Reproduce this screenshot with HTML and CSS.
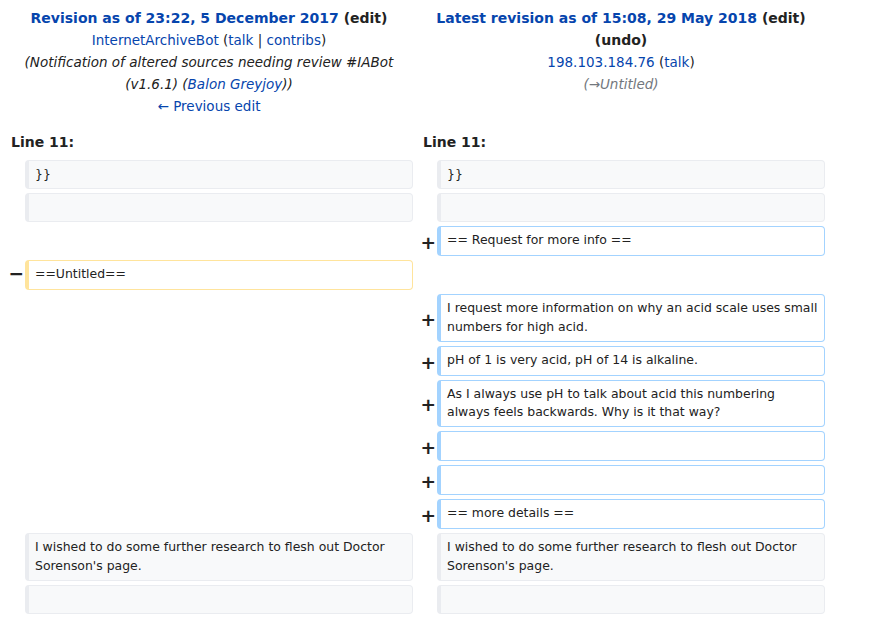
FILE: index.html
```html
<!DOCTYPE html>
<html lang="en">
<head>
<meta charset="utf-8">
<title>Difference between revisions</title>
<link rel="stylesheet" href="styles.css">
</head>
<body>
<table class="diff">
  <colgroup>
    <col class="col-marker"><col class="col-content"><col class="col-marker"><col class="col-content">
  </colgroup>
  <tr class="title-row">
    <td colspan="2" class="title">
      <div class="title-main"><a href="#" class="link">Revision as of 23:22, 5 December 2017</a> <span class="dark">(edit)</span></div>
      <div><a href="#" class="link">InternetArchiveBot</a> (<a href="#" class="link">talk</a> | <a href="#" class="link">contribs</a>)</div>
      <div class="comment">(Notification of altered sources needing review #IABot (v1.6.1) (<a href="#" class="link">Balon Greyjoy</a>))</div>
      <div><a href="#" class="link">← Previous edit</a></div>
    </td>
    <td colspan="2" class="title">
      <div class="title-main"><a href="#" class="link">Latest revision as of 15:08, 29 May 2018</a> <span class="dark">(edit)</span> <span class="dark">(undo)</span></div>
      <div><a href="#" class="link">198.103.184.76</a> (<a href="#" class="link">talk</a>)</div>
      <div class="comment muted">(→Untitled)</div>
    </td>
  </tr>
  <tr>
    <td colspan="2" class="lineno">Line 11:</td>
    <td colspan="2" class="lineno">Line 11:</td>
  </tr>
  <tr>
    <td class="marker"></td><td class="line context">}}</td>
    <td class="marker"></td><td class="line context">}}</td>
  </tr>
  <tr>
    <td class="marker"></td><td class="line context"><br></td>
    <td class="marker"></td><td class="line context"><br></td>
  </tr>
  <tr>
    <td colspan="2" class="blank"></td>
    <td class="marker"><span class="sign">+</span></td><td class="line added">== Request for more info ==</td>
  </tr>
  <tr>
    <td class="marker marker-del"><span class="sign">−</span></td><td class="line deleted">==Untitled==</td>
    <td colspan="2" class="blank"></td>
  </tr>
  <tr>
    <td colspan="2" class="blank"></td>
    <td class="marker"><span class="sign">+</span></td><td class="line added">I request more information on why an acid scale uses small numbers for high acid.</td>
  </tr>
  <tr>
    <td colspan="2" class="blank"></td>
    <td class="marker"><span class="sign">+</span></td><td class="line added">pH of 1 is very acid, pH of 14 is alkaline.</td>
  </tr>
  <tr>
    <td colspan="2" class="blank"></td>
    <td class="marker"><span class="sign">+</span></td><td class="line added">As I always use pH to talk about acid this numbering always feels backwards. Why is it that way?</td>
  </tr>
  <tr>
    <td colspan="2" class="blank"></td>
    <td class="marker"><span class="sign">+</span></td><td class="line added"><br></td>
  </tr>
  <tr>
    <td colspan="2" class="blank"></td>
    <td class="marker"><span class="sign">+</span></td><td class="line added"><br></td>
  </tr>
  <tr>
    <td colspan="2" class="blank"></td>
    <td class="marker"><span class="sign">+</span></td><td class="line added">== more details ==</td>
  </tr>
  <tr>
    <td class="marker"></td><td class="line context">I wished to do some further research to flesh out Doctor Sorenson's page.</td>
    <td class="marker"></td><td class="line context">I wished to do some further research to flesh out Doctor Sorenson's page.</td>
  </tr>
  <tr>
    <td class="marker"></td><td class="line context"><br></td>
    <td class="marker"></td><td class="line context"><br></td>
  </tr>
</table>
</body>
</html>
```

FILE: styles.css
```css
html, body {
  margin: 0;
  padding: 0;
  background: #ffffff;
}

body {
  font-family: "DejaVu Sans", Verdana, sans-serif;
  color: #222222;
  font-size: 14px;
}

.diff {
  border-collapse: separate;
  border-spacing: 4px;
  table-layout: fixed;
  width: 828px;
  margin: 0 0 0 1px;
}

.col-marker {
  width: 16px;
}

.col-content {
  width: 388px;
}

.title {
  text-align: center;
  vertical-align: top;
  line-height: 22px;
  padding: 3px 0 7px;
  font-size: 13.5px;
}

.title-main {
  font-weight: bold;
  font-size: 14px;
}

.link {
  color: #0645ad;
  text-decoration: none;
}

.dark {
  color: #222222;
}

.comment {
  font-style: italic;
}

.muted {
  color: #72777d;
}

.lineno {
  font-weight: bold;
  font-size: 14px;
  line-height: 22px;
  padding: 3px 6px;
  text-align: left;
}

.marker {
  text-align: right;
  vertical-align: middle;
  font-weight: bold;
  font-size: 18.5px;
  line-height: 21px;
  padding: 6px 0 3px;
  color: #222222;
  white-space: nowrap;
}

.marker-del {
  padding: 3px 0 6px;
}

.sign {
  margin-right: -3px;
}

.line {
  font-size: 12.45px;
  line-height: 18.5px;
  padding: 4.25px 6px;
  vertical-align: top;
  border: 1px solid #eaecf0;
  border-left-width: 4px;
  border-radius: 4px;
  white-space: pre-wrap;
  word-wrap: break-word;
}

.context {
  background: #f8f9fa;
  border-color: #eaecf0;
}

.added {
  background: #ffffff;
  border-color: #a3d3ff;
}

.deleted {
  background: #ffffff;
  border-color: #ffe49c;
}

.blank {
  padding: 0;
}
```
